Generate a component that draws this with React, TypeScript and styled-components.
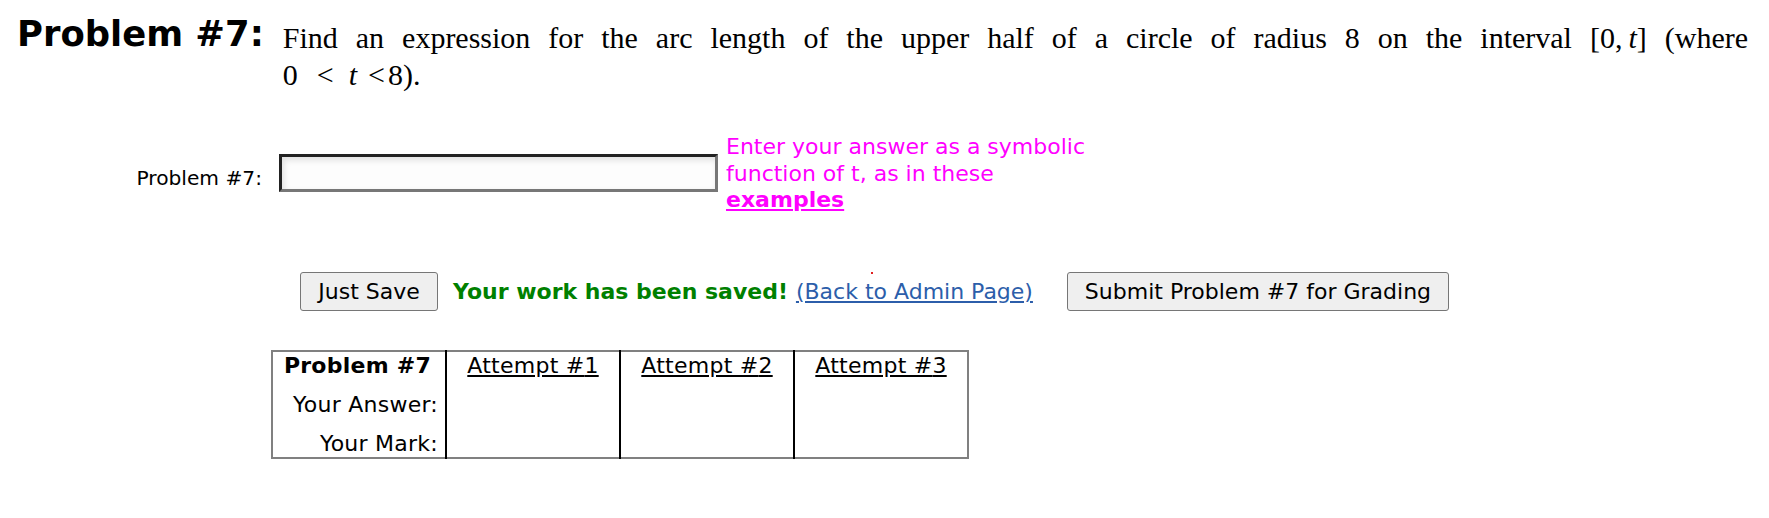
import React from 'react';
import styled, { createGlobalStyle } from 'styled-components';

const GlobalStyle = createGlobalStyle`
  html, body {
    margin: 0;
    padding: 0;
    background: #ffffff;
  }
  body {
    font-family: 'DejaVu Sans', Verdana, sans-serif;
    color: #000;
  }
`;

const Page = styled.div`
  position: relative;
  width: 1769px;
  height: 518px;
  overflow: hidden;
  background: #fff;
`;

const ProblemHeader = styled.div`
  display: flex;
  align-items: flex-start;
  padding: 12px 21px 0 17px;
`;

const ProblemTitle = styled.h1`
  flex: none;
  margin: 0;
  font-size: 35.4px;
  line-height: 43px;
  font-weight: bold;
  white-space: nowrap;
`;

const Statement = styled.div`
  flex: 1;
  margin: 7px 0 0 19px;
  font-family: 'Liberation Serif', 'Times New Roman', serif;
  font-size: 30px;
  line-height: 37px;
`;

// the first line of the statement is spread edge to edge, as in the page
const StatementLine = styled.div<{ $spread?: boolean }>`
  text-align: ${(p) => (p.$spread ? 'justify' : 'left')};
  text-align-last: ${(p) => (p.$spread ? 'justify' : 'auto')};
`;

const Math = styled.span`
  white-space: nowrap;
`;

const Rel = styled.span<{ $before: number; $after: number }>`
  margin: 0 ${(p) => p.$after}px 0 ${(p) => p.$before}px;
`;

const AnswerRow = styled.div`
  display: flex;
  align-items: center;
  margin-top: 41px;
`;

const AnswerLabel = styled.label`
  flex: none;
  width: 262px;
  margin-top: 9px;
  text-align: right;
  font-size: 20.2px;
  line-height: 23.4px;
`;

const AnswerInput = styled.input`
  flex: none;
  box-sizing: border-box;
  width: 439px;
  height: 38px;
  margin: -2px 0 0 17px;
  padding: 2px 6px;
  border: 3px solid;
  border-color: #222 #777 #777 #222;
  background: #fdfdfd;
  box-shadow: inset 2px 3px 6px rgba(0, 0, 0, 0.12);
  font-family: 'DejaVu Sans', Verdana, sans-serif;
  font-size: 20px;
  outline: none;
`;

const Hint = styled.div`
  flex: none;
  width: 375px;
  margin-left: 8px;
  color: #ff00ff;
  font-size: 22px;
  line-height: 26.7px;
`;

const HintLink = styled.a`
  color: #ff00ff;
  font-weight: bold;
  text-decoration: underline;
`;

const ActionRow = styled.div`
  position: relative;
  display: flex;
  align-items: center;
  height: 39px;
  margin-top: 58px;
  padding-left: 300px;
  font-size: 22px;
`;

const ActionButton = styled.button<{ $width: number; $gap?: number }>`
  flex: none;
  box-sizing: border-box;
  width: ${(p) => p.$width}px;
  height: 39px;
  margin-left: ${(p) => p.$gap ?? 0}px;
  padding: 0;
  border: 1px solid #767676;
  border-radius: 3px;
  background: #efefef;
  color: #000;
  font-family: 'DejaVu Sans', Verdana, sans-serif;
  font-size: 22px;
  white-space: nowrap;
`;

const SavedNote = styled.span`
  margin-left: 15px;
  color: #008000;
  font-weight: bold;
  white-space: nowrap;
`;

const AdminLink = styled.a`
  margin-left: 8px;
  color: #2c5eaa;
  text-decoration: underline;
  white-space: nowrap;
`;

const Speck = styled.span`
  position: absolute;
  left: 871px;
  top: 0;
  width: 2px;
  height: 2px;
  background: #e02020;
`;

const AttemptTable = styled.table`
  width: 698px;
  margin: 39px 0 0 271px;
  border: 2px solid #808080;
  border-collapse: collapse;
  table-layout: fixed;
  font-size: 22px;
  line-height: 26.7px;
  letter-spacing: 0.25px;
`;

const Cell = styled.td<{ $head?: boolean; $first?: boolean; $last?: boolean }>`
  padding: ${(p) => (p.$first ? 1 : 6)}px 7px ${(p) => (p.$last ? 0 : 6)}px;
  text-align: ${(p) => (p.$head ? 'right' : 'center')};
  font-weight: ${(p) => (p.$first && p.$head ? 'bold' : 'normal')};
  border-left: 2px solid #000;
  white-space: nowrap;
  &:first-child {
    border-left: none;
  }
`;

const HeadLabel = styled.span`
  margin-right: 7px;
`;

const AttemptLink = styled.a`
  color: #000;
  text-decoration: underline;
`;

const attempts = [1, 2, 3];

const App: React.FC = () => {
  return (
    <Page>
      <GlobalStyle />
      <ProblemHeader>
        <ProblemTitle>Problem #7:</ProblemTitle>
        <Statement>
          <StatementLine $spread>
            Find an expression for the arc length of the upper half of a circle of radius 8 on the
            interval{' '}
            <Math>
              [0,&thinsp;<i>t</i>]
            </Math>{' '}
            (where
          </StatementLine>
          <StatementLine>
            <Math>
              0<Rel $before={19} $after={15}>&lt;</Rel>
              <i>t</i>
              <Rel $before={11} $after={3}>&lt;</Rel>8
            </Math>
            ).
          </StatementLine>
        </Statement>
      </ProblemHeader>

      <AnswerRow>
        <AnswerLabel htmlFor="answer7">Problem #7:</AnswerLabel>
        <AnswerInput id="answer7" type="text" />
        <Hint>
          Enter your answer as a symbolic function of t, as in these{' '}
          <HintLink href="#">examples</HintLink>
        </Hint>
      </AnswerRow>

      <ActionRow>
        <ActionButton $width={138}>Just Save</ActionButton>
        <SavedNote>Your work has been saved!</SavedNote>
        <AdminLink href="#">(Back to Admin Page)</AdminLink>
        <ActionButton $width={382} $gap={34}>
          Submit Problem #7 for Grading
        </ActionButton>
        <Speck />
      </ActionRow>

      <AttemptTable>
        <tbody>
          <tr>
            <Cell $head $first>
              <HeadLabel>Problem #7</HeadLabel>
            </Cell>
            {attempts.map((n) => (
              <Cell key={n} $first>
                <AttemptLink href="#">Attempt #{n}</AttemptLink>
              </Cell>
            ))}
          </tr>
          <tr>
            <Cell $head>Your Answer:</Cell>
            {attempts.map((n) => (
              <Cell key={n} />
            ))}
          </tr>
          <tr>
            <Cell $head $last>
              Your Mark:
            </Cell>
            {attempts.map((n) => (
              <Cell key={n} $last />
            ))}
          </tr>
        </tbody>
      </AttemptTable>
    </Page>
  );
};

export default App;
